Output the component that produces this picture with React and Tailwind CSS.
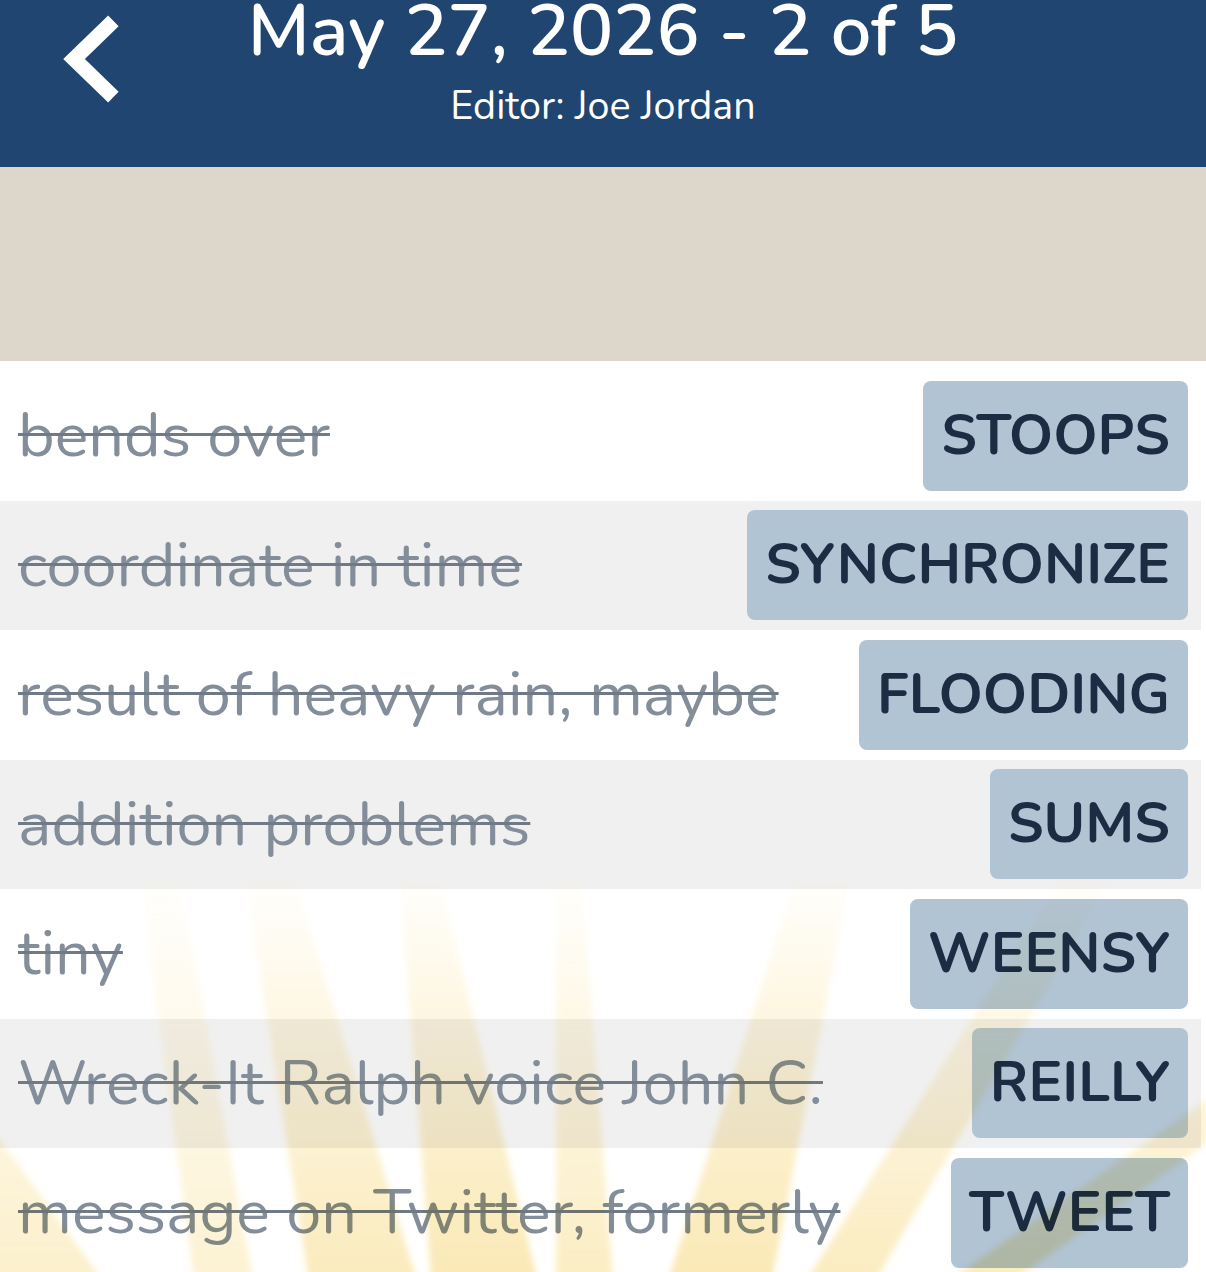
import React from "react";

const clues = [
  { clue: "bends over", answer: "STOOPS" },
  { clue: "coordinate in time", answer: "SYNCHRONIZE" },
  { clue: "result of heavy rain, maybe", answer: "FLOODING" },
  { clue: "addition problems", answer: "SUMS" },
  { clue: "tiny", answer: "WEENSY" },
  { clue: "Wreck-It Ralph voice John C.", answer: "REILLY" },
  { clue: "message on Twitter, formerly", answer: "TWEET" },
];

// Faint sun rays: each band runs from the bottom edge (b) up to y=880 (t)
const rays = [
  { b: [0, 110], t: [-260, -190], o: 0.7 },
  { b: [195, 255], t: [140, 180], o: 0.6 },
  { b: [310, 420], t: [245, 295], o: 0.9 },
  { b: [432, 540], t: [400, 440], o: 1 },
  { b: [556, 614], t: [556, 582], o: 0.8 },
  { b: [665, 770], t: [795, 850], o: 1 },
  { b: [800, 870], t: [1060, 1110], o: 0.85 },
  { b: [935, 1000], t: [1520, 1580], o: 0.8 },
];

function SunRays() {
  return (
    <svg
      className="pointer-events-none absolute inset-0 mix-blend-multiply"
      width="1206"
      height="1272"
      viewBox="0 0 1206 1272"
    >
      <defs>
        <linearGradient id="rayFade" x1="0" y1="870" x2="0" y2="1272" gradientUnits="userSpaceOnUse">
          <stop offset="0" stopColor="#f7d77a" stopOpacity="0" />
          <stop offset="0.35" stopColor="#f7d77a" stopOpacity="0.22" />
          <stop offset="1" stopColor="#f6d46e" stopOpacity="0.5" />
        </linearGradient>
        <filter id="raySoft" x="-10%" y="-10%" width="120%" height="120%">
          <feGaussianBlur stdDeviation="3" />
        </filter>
      </defs>
      <g filter="url(#raySoft)">
        {rays.map((r, i) => (
          <polygon
            key={i}
            points={`${r.b[0]},1290 ${r.b[1]},1290 ${r.t[1]},880 ${r.t[0]},880`}
            fill="url(#rayFade)"
            opacity={r.o}
          />
        ))}
      </g>
    </svg>
  );
}

function Row({ clue, answer, shaded }) {
  return (
    <div
      className={`flex h-[129.5px] items-center justify-between mr-[5px] pl-[18px] pr-[13px] ${
        shaded ? "bg-[#f0f0f0]" : "bg-white"
      }`}
    >
      <span className="text-[63px] leading-none text-[#838e9a] line-through decoration-[3px] decoration-[#6f7a86] whitespace-nowrap">
        {clue}
      </span>
      <div className="flex h-[110px] items-center rounded-[8px] bg-[#b1c4d4] px-[18px]">
        <span className="text-[56.5px] font-bold leading-none text-[#1b2c43] whitespace-nowrap">{answer}</span>
      </div>
    </div>
  );
}

export default function App() {
  return (
    <div className="relative h-[1272px] w-[1206px] overflow-hidden bg-white font-['Nunito','Lato','Noto_Sans',sans-serif]">
      <header className="grid h-[167px] grid-cols-[1fr_auto_1fr] bg-[#1f4570]">
        <div className="flex items-start pl-[52px] pt-[5px]">
          <svg width="80" height="106" viewBox="0 0 80 106">
            <polyline
              points="56,21 22,54 56,87"
              fill="none"
              stroke="#ffffff"
              strokeWidth="15"
              strokeLinecap="square"
              strokeLinejoin="miter"
            />
          </svg>
        </div>
        <div className="flex flex-col items-center text-white">
          <h1 className="mt-[-5px] text-[72px] font-semibold leading-none">May 27, 2026 - 2 of 5</h1>
          <p className="mt-[20px] text-[39.5px] leading-none">Editor: Joe Jordan</p>
        </div>
        <div />
      </header>
      <div className="h-[194px] bg-[#ddd7cb]" />
      <div className="pt-[10px]">
        {clues.map((c, i) => (
          <Row key={c.answer} clue={c.clue} answer={c.answer} shaded={i % 2 === 1} />
        ))}
      </div>
      <SunRays />
    </div>
  );
}
